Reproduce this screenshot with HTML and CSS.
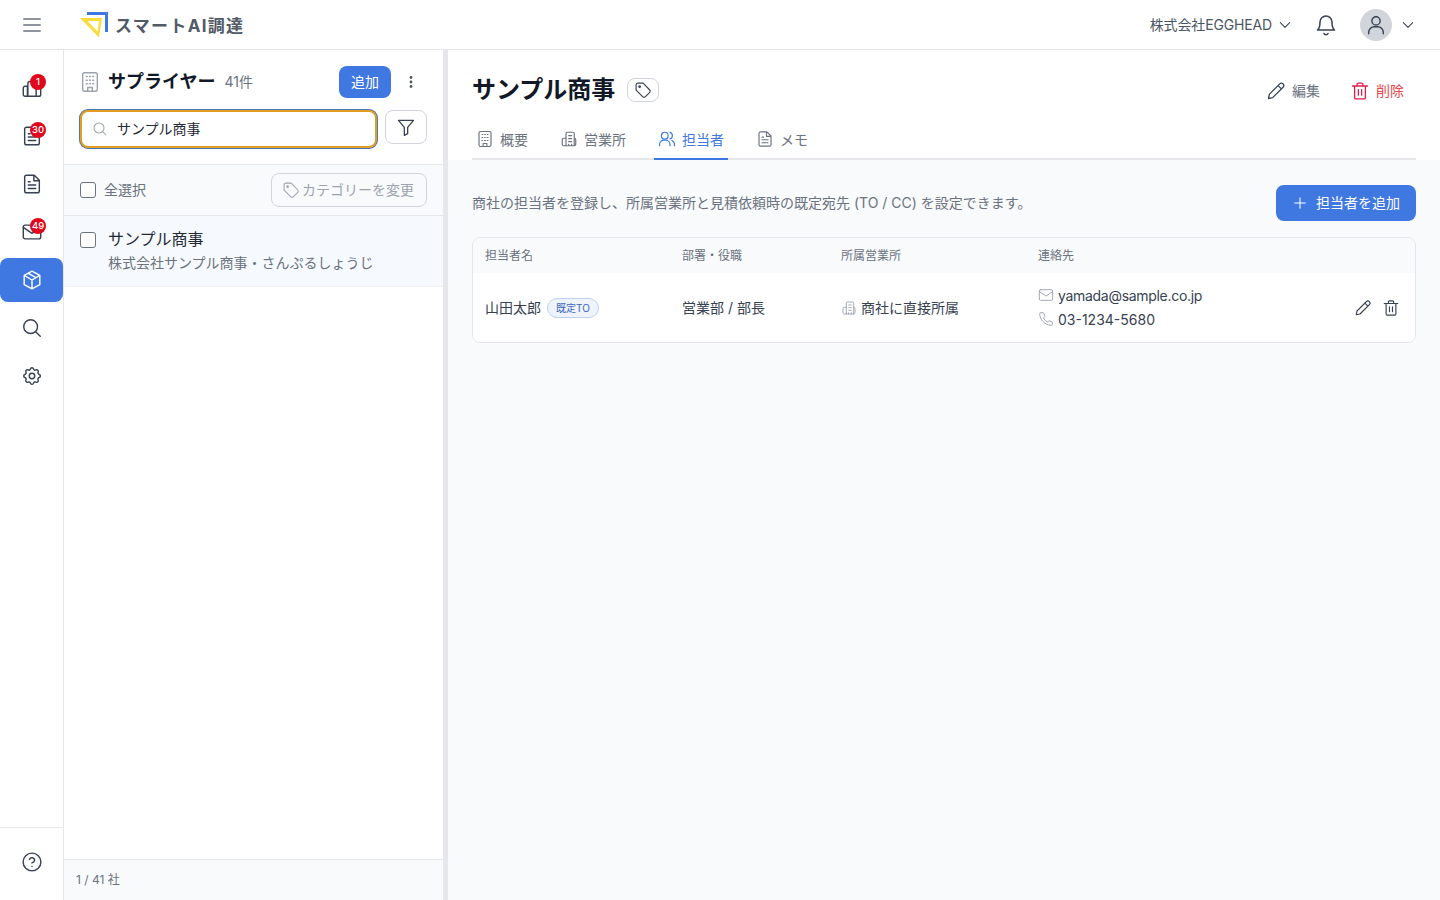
FILE: index.html
```html
<!DOCTYPE html>
<html lang="ja">
<head>
<meta charset="utf-8">
<title>スマートAI調達</title>
<link rel="stylesheet" href="styles.css">
</head>
<body>
<svg width="0" height="0" class="defs">
  <symbol id="i-building" viewBox="0 0 24 24"><rect x="4" y="2" width="16" height="20" rx="2"/><path d="M9.500 22v-4h5v4M8 6h1M11.500 6h1M15 6h1M8 10h1M11.500 10h1M15 10h1M8 14h1M11.500 14h1M15 14h1"/></symbol>
  <symbol id="i-office" viewBox="0 0 24 24"><path d="M8 21V5a2 2 0 0 1 2-2h7a2 2 0 0 1 2 2v16M8 11H5a2 2 0 0 0-2 2v6a2 2 0 0 0 2 2h14a2 2 0 0 0 2-2v-6a2 2 0 0 0-2-2M11.500 7.500h4M11.500 11.500h4M11.500 15.500h4M11.500 19v2M15.500 19v2"/></symbol>
  <symbol id="i-doc" viewBox="0 0 24 24"><path d="M14.500 2.500H6a2 2 0 0 0-2 2v15a2 2 0 0 0 2 2h12a2 2 0 0 0 2-2V8zM14 3v5.500h6M8 9.500h2M8 13h8M8 17h8"/></symbol>
  <symbol id="i-tag" viewBox="0 0 24 24"><path d="M12.200 2.800H5a2.200 2.200 0 0 0-2.200 2.200v7.200l9 9a2.200 2.200 0 0 0 3.100 0l6.100-6.100a2.200 2.200 0 0 0 0-3.100z"/><circle cx="7.500" cy="7.500" r="1"/></symbol>
  <symbol id="i-pencil" viewBox="0 0 24 24"><path d="M16.500 3.500a2.800 2.800 0 0 1 4 4L8 20l-5 1 1-5zM14.500 5.500l4 4"/></symbol>
  <symbol id="i-trash" viewBox="0 0 24 24"><path d="M3 6h18M8.500 6V4a1.500 1.500 0 0 1 1.500-1.500h4A1.500 1.500 0 0 1 15.500 4v2M5.500 6v14a1.500 1.500 0 0 0 1.500 1.500h10a1.500 1.500 0 0 0 1.500-1.500V6M10 10.500v6.500M14 10.500v6.500"/></symbol>
  <symbol id="i-search" viewBox="0 0 24 24"><circle cx="10.500" cy="10.500" r="7.500"/><path d="M21 21l-5-5"/></symbol>
  <symbol id="i-chev" viewBox="0 0 24 24"><path d="M5 8.500l7 7 7-7"/></symbol>
</svg>

<header class="topbar">
  <button class="menu-btn" aria-label="menu">
    <svg class="ic ic-22 c-gray" viewBox="0 0 24 24"><path d="M3 5.500h18M3 12h18M3 18.500h18"/></svg>
  </button>
  <div class="logo">
    <svg class="logo-mark" viewBox="0 0 30 28">
      <path d="M8 1H29V21H26V4H8z" fill="#3f78e0"/>
      <path d="M1 7H23L20 26.500 1 7zM8.500 10l10 10.500L20 10z" fill="#fbdc3c" fill-rule="evenodd"/>
    </svg>
    <span class="logo-text">スマートAI調達</span>
  </div>
  <div class="spacer"></div>
  <div class="company"><span class="t">株式会社EGGHEAD</span><svg class="ic ic-16 c-dark"><use href="#i-chev"/></svg></div>
  <svg class="ic ic-24 c-dark bell" viewBox="0 0 24 24"><path d="M6 9a6 6 0 0 1 12 0c0 6 2.500 8 2.500 8h-17S6 15 6 9zM10 20.500a2.200 2.200 0 0 0 4 0"/></svg>
  <div class="avatar"><svg class="ic ic-22 c-dark" viewBox="0 0 24 24"><circle cx="12" cy="7.500" r="4.500"/><path d="M4 21.500v-1.500a6 6 0 0 1 6-6h4a6 6 0 0 1 6 6v1.500"/></svg></div>
  <svg class="ic ic-16 c-dark user-chev"><use href="#i-chev"/></svg>
</header>

<div class="layout">
  <nav class="rail">
    <div class="rail-items">
      <a class="rail-item">
        <svg class="ic ic-22 c-dark" viewBox="0 0 24 24"><path d="M2.500 12a2 2 0 0 1 2-2h2.500v11H4.500a2 2 0 0 1-2-2zM7.500 7a2 2 0 0 1 2-2h5a2 2 0 0 1 2 2v14h-9zM16.500 10h3a2 2 0 0 1 2 2v7a2 2 0 0 1-2 2h-3z"/></svg>
        <span class="badge">1</span>
      </a>
      <a class="rail-item">
        <svg class="ic ic-22 c-dark"><use href="#i-doc"/></svg>
        <span class="badge">30</span>
      </a>
      <a class="rail-item"><svg class="ic ic-22 c-dark"><use href="#i-doc"/></svg></a>
      <a class="rail-item">
        <svg class="ic ic-22 c-dark" viewBox="0 0 24 24"><rect x="2.500" y="4.500" width="19" height="15" rx="2"/><path d="M2.500 7l9.500 6.500L21.500 7"/></svg>
        <span class="badge">49</span>
      </a>
      <a class="rail-item active">
        <svg class="ic ic-22 c-white" viewBox="0 0 24 24"><path d="M12 2.200l8.500 4.700v10.200L12 21.800l-8.500-4.700V6.900zM3.800 7.100L12 12l8.200-4.900M12 12v9.500M7.700 4.600l8.500 4.900"/></svg>
      </a>
      <a class="rail-item"><svg class="ic ic-22 c-dark"><use href="#i-search"/></svg></a>
      <a class="rail-item">
        <svg class="ic ic-22 c-dark" viewBox="0 0 24 24"><circle cx="12" cy="12" r="3"/><path d="M10.300 4.300c.4-1.800 3-1.800 3.400 0a1.700 1.700 0 0 0 2.600 1.100c1.500-.9 3.300.8 2.400 2.400a1.700 1.700 0 0 0 1.100 2.500c1.800.4 1.800 3 0 3.400a1.700 1.700 0 0 0-1.100 2.600c.9 1.500-.9 3.300-2.400 2.400a1.700 1.700 0 0 0-2.600 1.100c-.4 1.800-3 1.800-3.400 0a1.700 1.700 0 0 0-2.500-1.100c-1.600.9-3.300-.9-2.400-2.400a1.700 1.700 0 0 0-1.100-2.600c-1.800-.4-1.800-3 0-3.400a1.700 1.700 0 0 0 1.100-2.500c-.9-1.600.8-3.300 2.400-2.400a1.700 1.700 0 0 0 2.500-1.100z"/></svg>
      </a>
    </div>
    <div class="rail-foot">
      <svg class="ic ic-22 c-dark" viewBox="0 0 24 24"><circle cx="12" cy="12" r="9.700"/><path d="M9.200 9.200a2.900 2.900 0 0 1 5.600 1c0 1.900-2.800 2.800-2.800 2.800M12 17h.01"/></svg>
    </div>
  </nav>

  <aside class="panel">
    <div class="panel-head">
      <div class="panel-title-row">
        <svg class="ic ic-22 c-muted panel-ic"><use href="#i-building"/></svg>
        <h2 class="panel-title">サプライヤー</h2>
        <span class="count t">41件</span>
        <span class="spacer"></span>
        <button class="btn-add"><span class="t t-3">追加</span></button>
        <svg class="kebab" viewBox="0 0 16 16"><circle cx="8" cy="3.500" r="1.400"/><circle cx="8" cy="8" r="1.400"/><circle cx="8" cy="12.500" r="1.400"/></svg>
      </div>
      <div class="search-row">
        <div class="search-box">
          <svg class="ic ic-16 c-muted"><use href="#i-search"/></svg>
          <span class="search-text t">サンプル商事</span>
        </div>
        <button class="filter-btn">
          <svg class="ic ic-20 c-dark" viewBox="0 0 24 24"><path d="M3 4h18l-7 8.500V20l-4 2v-9.500z"/></svg>
        </button>
      </div>
    </div>
    <div class="select-bar">
      <label class="check-label"><span class="check"></span><span class="t">全選択</span></label>
      <button class="cat-btn"><svg class="ic ic-18 c-faint"><use href="#i-tag"/></svg><span class="t">カテゴリーを変更</span></button>
    </div>
    <div class="list">
      <div class="list-item">
        <span class="check list-check"></span>
        <div class="list-text">
          <div class="list-name">サンプル商事</div>
          <div class="list-sub">株式会社サンプル商事・さんぷるしょうじ</div>
        </div>
      </div>
    </div>
    <div class="panel-foot"><span class="t t-3">1 / 41 社</span></div>
  </aside>

  <div class="splitter"></div>

  <main class="main">
    <div class="main-top">
      <div class="title-row">
        <h1 class="main-title">サンプル商事</h1>
        <button class="tag-btn"><svg class="ic ic-18 c-dark"><use href="#i-tag"/></svg></button>
        <span class="spacer"></span>
        <button class="act-btn"><svg class="ic ic-20 c-dark"><use href="#i-pencil"/></svg><span class="t">編集</span></button>
        <button class="act-btn danger"><svg class="ic ic-20 c-red"><use href="#i-trash"/></svg><span class="t">削除</span></button>
      </div>
      <div class="tabs">
        <a class="tab"><svg class="ic ic-18 c-gray"><use href="#i-building"/></svg>概要</a>
        <a class="tab"><svg class="ic ic-18 c-gray"><use href="#i-office"/></svg>営業所</a>
        <a class="tab current"><svg class="ic ic-18 c-blue" viewBox="0 0 24 24"><circle cx="9" cy="7.500" r="4.500"/><path d="M2 21v-1.500a6 6 0 0 1 6-6h2a6 6 0 0 1 6 6V21M16 3.200a4.500 4.500 0 0 1 0 8.600M18.500 14a6 6 0 0 1 3.500 5.500V21"/></svg>担当者</a>
        <a class="tab"><svg class="ic ic-18 c-gray"><use href="#i-doc"/></svg>メモ</a>
      </div>
    </div>
    <div class="content">
      <div class="content-head">
        <p class="desc">商社の担当者を登録し、所属営業所と見積依頼時の既定宛先 (TO / CC) を設定できます。</p>
        <button class="btn-primary"><svg class="ic ic-16 c-white" viewBox="0 0 24 24"><path d="M12 4v16M4 12h16"/></svg><span class="t">担当者を追加</span></button>
      </div>
      <div class="table">
        <div class="t-row t-head">
          <div class="t">担当者名</div>
          <div class="t">部署・役職</div>
          <div class="t">所属営業所</div>
          <div class="t">連絡先</div>
          <div></div>
        </div>
        <div class="t-row t-body">
          <div class="name-cell"><span class="t">山田太郎</span><span class="pill">既定TO</span></div>
          <div class="t">営業部 / 部長</div>
          <div class="office-cell"><svg class="ic ic-16 c-faint"><use href="#i-office"/></svg><span class="t">商社に直接所属</span></div>
          <div class="contact">
            <div class="contact-line"><svg class="ic ic-16 c-faint contact-ic" viewBox="0 0 24 24"><rect x="2" y="4" width="20" height="16" rx="2"/><path d="M2 7l10 6.500L22 7"/></svg><span class="email">yamada@sample.co.jp</span></div>
            <div class="contact-line"><svg class="ic ic-16 c-faint contact-ic" viewBox="0 0 24 24"><path d="M7.500 2.500H4.500a2 2 0 0 0-2 2.200C3.500 14 10 20.500 19.300 21.500a2 2 0 0 0 2.200-2v-3l-5-2-2 2.200c-2.800-1.400-5-3.600-6.400-6.400L10.300 8.500z"/></svg>03-1234-5680</div>
          </div>
          <div class="row-actions">
            <svg class="ic ic-18 c-dark"><use href="#i-pencil"/></svg>
            <svg class="ic ic-18 c-dark"><use href="#i-trash"/></svg>
          </div>
        </div>
      </div>
    </div>
  </main>
</div>
</body>
</html>
```

FILE: styles.css
```css
* { box-sizing: border-box; }
html, body { margin: 0; height: 100%; }
body {
  font-family: Inter, "Noto Sans CJK JP", sans-serif;
  color: #111827;
  background: #fff;
  font-size: 14px;
  overflow: hidden;
}
button { font-family: inherit; cursor: pointer; }
h1, h2, p { margin: 0; }
.defs { position: absolute; }
.spacer { flex: 1; }

/* CJK glyphs sit low in the line box; this re-centres them */
.t { display: inline-block; padding-bottom: 2px; }
.t-3 { padding-bottom: 3px; }

.ic { fill: none; stroke-width: 1.55; stroke-linecap: round; stroke-linejoin: round; flex: none; }
.ic-16 { width: 16px; height: 16px; }
.ic-18 { width: 18px; height: 18px; }
.ic-20 { width: 20px; height: 20px; }
.ic-22 { width: 22px; height: 22px; }
.ic-24 { width: 24px; height: 24px; }
.c-dark { stroke: #374151; }
.c-gray { stroke: #6b7280; }
.c-muted { stroke: #9ca3af; }
.c-faint { stroke: #9ca3af; stroke-width: 1.4; }
.c-white { stroke: #fff; }
.c-blue { stroke: #3f78e0; }
.c-red { stroke: #e11d48; }

/* Top bar */
.topbar {
  height: 50px;
  display: flex;
  align-items: center;
  border-bottom: 1px solid #e5e7eb;
  background: #fff;
}
.menu-btn {
  width: 64px;
  height: 49px;
  border: 0;
  background: none;
  display: flex;
  align-items: center;
  justify-content: center;
}
.logo { display: flex; align-items: center; margin-left: 15px; gap: 6px; }
.logo-mark { width: 30px; height: 28px; }
.logo-text {
  font-size: 17px;
  font-weight: 700;
  color: #525a66;
  letter-spacing: 1.3px;
  padding-bottom: 1px;
}
.company {
  display: flex;
  align-items: center;
  gap: 5px;
  font-size: 14px;
  color: #4b5563;
  letter-spacing: -0.15px;
}
.bell { margin-left: 21px; }
.avatar {
  width: 32px;
  height: 32px;
  border-radius: 50%;
  background: #d1d5db;
  margin-left: 22px;
  display: flex;
  align-items: center;
  justify-content: center;
}
.user-chev { margin-left: 8px; margin-right: 24px; }

/* Layout */
.layout { display: flex; height: 850px; }

/* Rail */
.rail {
  width: 64px;
  flex: none;
  border-right: 1px solid #e5e7eb;
  display: flex;
  flex-direction: column;
  background: #fff;
}
.rail-items {
  flex: 1;
  display: flex;
  flex-direction: column;
  gap: 4px;
  padding-top: 16px;
}
.rail-item {
  position: relative;
  height: 44px;
  border-radius: 8px;
  display: flex;
  align-items: center;
  justify-content: center;
}
.rail-item.active { background: #3f78e0; }
.badge {
  position: absolute;
  left: 30px;
  top: 8px;
  min-width: 16px;
  height: 16px;
  border-radius: 8px;
  background: #e0061b;
  color: #fff;
  font-size: 9.5px;
  font-weight: 500;
  line-height: 16px;
  text-align: center;
}
.rail-foot {
  height: 73px;
  padding-bottom: 4px;
  border-top: 1px solid #e5e7eb;
  display: flex;
  align-items: center;
  justify-content: center;
}

/* Supplier panel */
.panel {
  width: 379px;
  flex: none;
  display: flex;
  flex-direction: column;
  background: #fff;
}
.panel-head { padding: 16px; height: 115px; border-bottom: 1px solid #e5e7eb; }
.panel-title-row { display: flex; align-items: center; height: 32px; }
.panel-ic { margin-left: -1px; }
.panel-title { font-size: 18px; font-weight: 700; color: #111827; margin-left: 7px; line-height: 28px; }
.count { font-size: 14px; color: #6b7280; margin-left: 9px; }
.btn-add {
  width: 52px;
  height: 32px;
  border: 0;
  border-radius: 8px;
  background: #3f78e0;
  color: #fff;
  font-size: 14px;
  padding: 0;
}
.kebab { width: 16px; height: 16px; fill: #4b5563; margin-left: 12px; margin-right: 8px; }
.search-row { display: flex; gap: 8px; margin-top: 12px; align-items: flex-start; }
.search-box {
  width: 297px;
  height: 38px;
  display: flex;
  align-items: center;
  gap: 9px;
  padding-left: 10px;
  border: 2px solid #e19f1d;
  border-radius: 8px;
  background: #fff;
  box-shadow: 0 0 0 1px #4a74c4;
}
.search-text { font-size: 14px; color: #1f2937; padding-bottom: 3px; }
.filter-btn {
  width: 42px;
  height: 34px;
  border: 1px solid #d1d5db;
  border-radius: 8px;
  background: #fff;
  display: flex;
  align-items: center;
  justify-content: center;
  padding: 0;
}
.select-bar {
  height: 51px;
  padding: 0 16px;
  display: flex;
  align-items: center;
  justify-content: space-between;
  background: #f9fafb;
  border-bottom: 1px solid #e5e7eb;
}
.check-label { display: flex; align-items: center; gap: 8px; font-size: 14px; color: #6b7280; }
.check {
  width: 16px;
  height: 16px;
  border: 1px solid #6b7280;
  border-radius: 3px;
  background: #fff;
  flex: none;
  display: block;
}
.cat-btn {
  width: 156px;
  height: 34px;
  border: 1px solid #d1d5db;
  border-radius: 8px;
  background: transparent;
  color: #9ca3af;
  font-size: 14px;
  display: flex;
  align-items: center;
  justify-content: center;
  gap: 2px;
  padding: 0 2px 0 0;
}
.list { flex: 1; }
.list-item {
  height: 71px;
  background: #f6f9fd;
  border-bottom: 1px solid #f0f2f5;
  display: flex;
  align-items: flex-start;
  padding: 11px 16px 0;
  gap: 12px;
}
.list-check { margin-top: 5px; }
.list-name { font-size: 16px; color: #1f2937; line-height: 24px; }
.list-sub { font-size: 14px; color: #6b7280; line-height: 20px; margin-top: 2px; }
.panel-foot {
  height: 41px;
  border-top: 1px solid #e5e7eb;
  background: #f9fafb;
  padding-left: 12px;
  font-size: 12px;
  color: #6b7280;
  display: flex;
  align-items: center;
}

.splitter { width: 5px; flex: none; background: #e5e7eb; }

/* Main */
.main { flex: 1; display: flex; flex-direction: column; background: #f9fafb; min-width: 0; }
.main-top { background: #fff; padding: 0 24px; height: 110px; }
.title-row { display: flex; align-items: center; height: 69px; padding-top: 9px; }
.main-title { font-size: 24px; font-weight: 700; color: #111827; padding-bottom: 3px; }
.tag-btn {
  width: 32px;
  height: 24px;
  margin-left: 12px;
  margin-top: 2px;
  border: 1px solid #d1d5db;
  border-radius: 8px;
  background: #fff;
  display: flex;
  align-items: center;
  justify-content: center;
  padding: 0;
}
.act-btn {
  border: 0;
  background: none;
  display: flex;
  align-items: center;
  gap: 6px;
  font-size: 14px;
  color: #6b7280;
  padding: 0 12px;
  height: 36px;
  margin-top: 4px;
}
.act-btn.danger { color: #e5484d; margin-left: 6px; }
.tabs {
  display: flex;
  gap: 24px;
  height: 41px;
  border-bottom: 2px solid #e5e7eb;
}
.tab {
  display: flex;
  align-items: center;
  gap: 6px;
  height: 41px;
  padding: 0 4px;
  font-size: 14px;
  color: #6b7280;
  border-bottom: 2px solid transparent;
}
.tab.current { color: #3f78e0; border-bottom-color: #3f78e0; }

.content { padding: 25px 24px 24px; }
.content-head { display: flex; align-items: center; justify-content: space-between; height: 36px; }
.desc { font-size: 14px; color: #6b7280; padding-bottom: 3px; }
.btn-primary {
  width: 140px;
  height: 36px;
  border: 0;
  border-radius: 8px;
  background: #3f78e0;
  color: #fff;
  font-size: 14px;
  display: flex;
  align-items: center;
  justify-content: center;
  gap: 8px;
  padding: 0;
}
.table {
  margin-top: 16px;
  border: 1px solid #e5e7eb;
  border-radius: 8px;
  overflow: hidden;
  background: #fff;
}
.t-row {
  display: grid;
  grid-template-columns: 197px 159px 197px 1fr 64px;
  padding-left: 12px;
  align-items: center;
}
.t-head { height: 35px; background: #f9fafb; font-size: 12px; color: #6b7280; }
.t-body { height: 69px; background: #fff; font-size: 14px; color: #374151; }
.name-cell { display: flex; align-items: center; gap: 6px; }
.pill {
  display: inline-flex;
  align-items: center;
  height: 20px;
  padding: 0 8px;
  border: 1px solid #bfd0ee;
  border-radius: 10px;
  background: #eef3fc;
  color: #3b66b8;
  font-size: 10px;
}
.office-cell { display: flex; align-items: center; gap: 4px; }
.contact { display: flex; flex-direction: column; gap: 4px; }
.contact-line { display: flex; align-items: center; gap: 4px; line-height: 20px; }
.contact-ic { margin-bottom: 2px; }
.email { letter-spacing: -0.3px; }
.row-actions { display: flex; gap: 10px; align-items: center; padding-left: 3px; }
```
